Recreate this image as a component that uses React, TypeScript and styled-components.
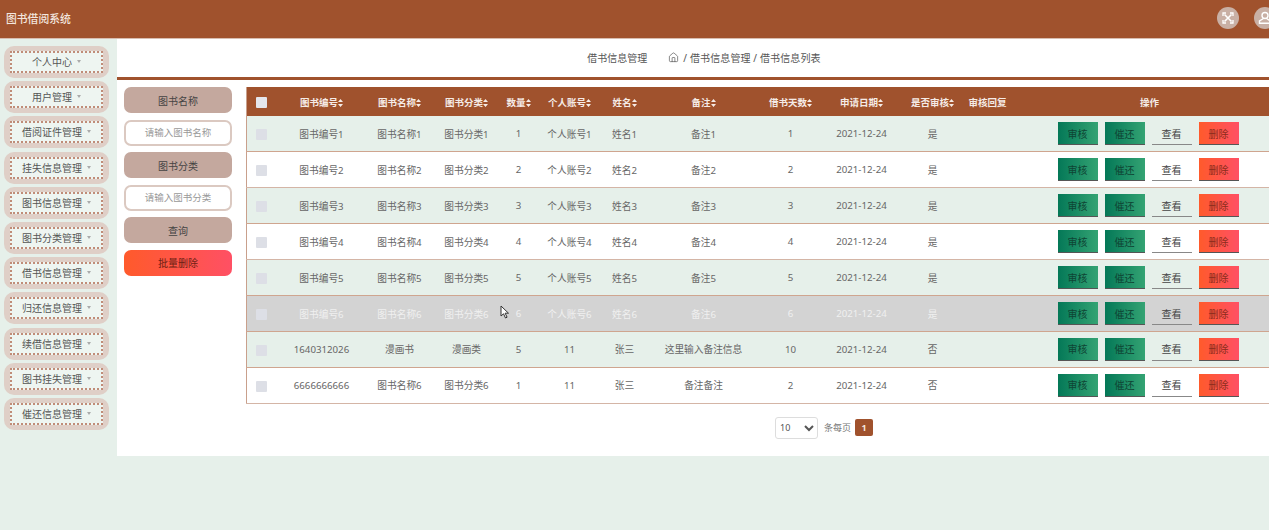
import React from "react";
import styled, { createGlobalStyle } from "styled-components";
import { House } from "lucide-react";

const Global = createGlobalStyle`
  html, body { margin: 0; padding: 0; height: 100%; overflow: hidden; background: #e6f0ea; }
  body { font-family: "Noto Sans", "Noto Sans CJK SC", sans-serif; font-size: 10px; color: #666; }
  * { box-sizing: border-box; }
`;

const Page = styled.div`
  width: 1269px;
  height: 530px;
  position: relative;
  overflow: hidden;
  background: #e6f0ea;
`;
const TopBar = styled.header`
  height: 39px;
  background: #a0522d;
  border-bottom: 1px solid #d8bdb0;
  display: flex;
  align-items: center;
  padding: 0 0 3px 6px;
  color: #f3e6df;
  font-size: 10.8px;
  font-weight: 500;
`;
const Title = styled.div`
  flex: 1;
`;
const Tools = styled.div`
  display: flex;
  gap: 15px;
  margin-right: -7px;
`;
const RoundIcon = styled.div`
  width: 22px;
  height: 22px;
  border-radius: 50%;
  background: #c9b0a5;
  display: flex;
  align-items: center;
  justify-content: center;
`;
const Body = styled.div`
  display: flex;
  align-items: flex-start;
`;
const Side = styled.nav`
  width: 117px;
  flex: none;
  padding: 7px 8px 0 4px;
  display: flex;
  flex-direction: column;
  gap: 3.2px;
`;
const MenuOuter = styled.div`
  height: 32px;
  border-radius: 10px;
  background: #dfcfc7;
  padding: 5px 6px;
`;
const MenuInner = styled.div`
  height: 22px;
  border: 2px dotted #c08c78;
  background: #eef5f1;
  display: flex;
  align-items: center;
  justify-content: center;
  gap: 5px;
  font-size: 10px;
  color: #555;
  padding-bottom: 1px;
`;
const Caret = styled.span`
  width: 0;
  height: 0;
  border-left: 2.5px solid transparent;
  border-right: 2.5px solid transparent;
  border-top: 3px solid #aaa;
`;
const Main = styled.main`
  width: 1152px;
  height: 417px;
  background: #fff;
  overflow: hidden;
`;
const CrumbBar = styled.div`
  height: 41px;
  border-bottom: 3px solid #a0522d;
  display: flex;
  align-items: center;
  justify-content: center;
  gap: 21px;
  padding: 0 0 2px 22px;
  font-size: 10px;
  color: #555;
`;
const Crumbs = styled.div`
  display: flex;
  align-items: center;
  gap: 4px;
  letter-spacing: 0.12px;
`;
const Content = styled.div`
  display: flex;
  align-items: flex-start;
  gap: 14px;
  padding: 7px 0 0 7px;
`;
const FilterCol = styled.div`
  width: 108px;
  flex: none;
  display: flex;
  flex-direction: column;
  gap: 6.6px;
`;
const FilterLabel = styled.div`
  height: 26px;
  border-radius: 7px;
  background: #c4a89e;
  color: #444;
  font-size: 10px;
  display: flex;
  align-items: center;
  justify-content: center;
`;
const FilterInput = styled.input`
  height: 26px;
  width: 100%;
  border-radius: 7px;
  border: 2px solid #dbc9c1;
  background: #fff;
  font: inherit;
  font-size: 9.5px;
  text-align: center;
  outline: none;
  padding: 0;
  &::placeholder { color: #999; }
`;
const DangerBtn = styled.div`
  height: 26px;
  border-radius: 7px;
  background: linear-gradient(90deg, #ff5a2b, #ff5064);
  color: #6e1f14;
  font-size: 10px;
  display: flex;
  align-items: center;
  justify-content: center;
`;
const TableArea = styled.div`
  width: 1040px;
  flex: none;
`;
const Table = styled.table`
  width: 1040px;
  table-layout: fixed;
  border-collapse: collapse;
  border-left: 1px solid #c9a08c;
`;
const HeadRow = styled.tr`
  height: 29px;
  background: #a0522d;
`;
const Th = styled.th`
  padding: 0;
  font-size: 9.5px;
  font-weight: 700;
  color: #f5ebe6;
  text-align: center;
  white-space: nowrap;
`;
const Sort = styled.svg`
  width: 5px;
  height: 8px;
  vertical-align: -1px;
`;
const Row = styled.tr<{ $kind: "alt" | "plain" | "hover" }>`
  height: 35.93px;
  border-bottom: 1.5px solid ${(p) => (p.$kind === "plain" ? "#d4b5a6" : "#cfa58f")};
  background: ${(p) => (p.$kind === "alt" ? "#e6f0ea" : p.$kind === "hover" ? "#d3d3d3" : "#fff")};
  color: ${(p) => (p.$kind === "hover" ? "#f0f0f0" : "#666")};
`;
const Td = styled.td`
  padding: 0;
  font-size: 9.7px;
  text-align: center;
  white-space: nowrap;
`;
const Check = styled.span<{ $head?: boolean }>`
  display: inline-block;
  width: 11px;
  height: 11px;
  vertical-align: middle;
  background: ${(p) => (p.$head ? "#e4e6ec" : "#dddfe6")};
  border-radius: 1px;
`;
const Actions = styled.div`
  display: flex;
  gap: 7px;
  padding-left: 45px;
`;
const ActionBtn = styled.div<{ $tone: "green" | "view" | "red" }>`
  width: 40px;
  height: 23px;
  font-size: 10px;
  display: flex;
  align-items: center;
  justify-content: center;
  color: ${(p) => (p.$tone === "view" ? "#444" : p.$tone === "red" ? "#8a2c1c" : "#0f4534")};
  background: ${(p) =>
    p.$tone === "green"
      ? "linear-gradient(90deg, #047857, #34a373)"
      : p.$tone === "red"
      ? "linear-gradient(90deg, #ff5a2b, #ff5064)"
      : "transparent"};
  border-bottom: 1.5px solid ${(p) => (p.$tone === "view" ? "#888" : "#555")};
`;
const Pager = styled.div`
  display: flex;
  align-items: center;
  padding: 13px 0 0 529px;
  font-size: 9px;
  color: #777;
`;
const PageSelect = styled.select`
  width: 43px;
  height: 22px;
  margin-right: 6px;
  border: 1px solid #ddd;
  border-radius: 3px;
  background: #fff;
  color: #555;
  font: inherit;
  font-size: 9px;
  outline: none;
`;
const PageNum = styled.div`
  width: 18px;
  height: 17px;
  margin-left: 4px;
  border-radius: 2px;
  background: #a0522d;
  color: #f5e6df;
  font-size: 9px;
  font-weight: 700;
  display: flex;
  align-items: center;
  justify-content: center;
`;
const Cursor = styled.svg`
  position: absolute;
  left: 500px;
  top: 305px;
  width: 10px;
  height: 14px;
`;

const menu = ["个人中心", "用户管理", "借阅证件管理", "挂失信息管理", "图书信息管理", "图书分类管理", "借书信息管理", "归还信息管理", "续借信息管理", "图书挂失管理", "催还信息管理"];
const cols = [30, 90, 66, 68, 36, 66, 44, 114, 60, 82, 60, 50, 274];
const heads: [string, boolean][] = [
  ["图书编号", true], ["图书名称", true], ["图书分类", true], ["数量", true], ["个人账号", true],
  ["姓名", true], ["备注", true], ["借书天数", true], ["申请日期", true], ["是否审核", true], ["审核回复", false], ["操作", false],
];
const numbered = [1, 2, 3, 4, 5, 6].map((n) => [
  `图书编号${n}`, `图书名称${n}`, `图书分类${n}`, `${n}`, `个人账号${n}`, `姓名${n}`, `备注${n}`, `${n}`, "2021-12-24", "是", "",
]);
const rows = [
  ...numbered,
  ["1640312026", "漫画书", "漫画类", "5", "11", "张三", "这里输入备注信息", "10", "2021-12-24", "否", ""],
  ["6666666666", "图书名称6", "图书分类6", "1", "11", "张三", "备注备注", "2", "2021-12-24", "否", ""],
];

export default function App() {
  return (
    <Page>
      <Global />
      <TopBar>
        <Title>图书借阅系统</Title>
        <Tools>
          <RoundIcon>
            <svg width="12" height="12" viewBox="0 0 12 12" fill="none" stroke="#fff" strokeWidth="1.6">
              <path d="M2.5 2.5 9.5 9.5M9.5 2.5 2.5 9.5" />
              <path d="M1 4V1h3M8 1h3v3M11 8v3H8M4 11H1V8" strokeWidth="1.3" />
            </svg>
          </RoundIcon>
          <RoundIcon>
            <svg width="14" height="14" viewBox="0 0 14 14" fill="none" stroke="#fff" strokeWidth="1.4">
              <circle cx="7" cy="4.5" r="3" />
              <path d="M5.5 7.5 1.5 10v2.3h11V10l-4-2.5" />
            </svg>
          </RoundIcon>
        </Tools>
      </TopBar>
      <Body>
        <Side>
          {menu.map((m) => (
            <MenuOuter key={m}>
              <MenuInner>{m}<Caret /></MenuInner>
            </MenuOuter>
          ))}
        </Side>
        <Main>
          <CrumbBar>
            <span>借书信息管理</span>
            <Crumbs>
              <House size={11} strokeWidth={1.5} />
              <span>/ 借书信息管理 / 借书信息列表</span>
            </Crumbs>
          </CrumbBar>
          <Content>
            <FilterCol>
              <FilterLabel>图书名称</FilterLabel>
              <FilterInput placeholder="请输入图书名称" readOnly />
              <FilterLabel>图书分类</FilterLabel>
              <FilterInput placeholder="请输入图书分类" readOnly />
              <FilterLabel>查询</FilterLabel>
              <DangerBtn>批量删除</DangerBtn>
            </FilterCol>
            <TableArea>
              <Table>
                <colgroup>
                  {cols.map((w, i) => <col key={i} width={w} />)}
                </colgroup>
                <thead>
                  <HeadRow>
                    <Th><Check $head /></Th>
                    {heads.map(([h, s]) => (
                      <Th key={h}>
                        {h}
                        {s && (
                          <Sort viewBox="0 0 5 8">
                            <path d="M2.5 0 5 3H0zM2.5 8 0 5h5z" fill="#f5ebe6" />
                          </Sort>
                        )}
                      </Th>
                    ))}
                  </HeadRow>
                </thead>
                <tbody>
                  {rows.map((r, i) => (
                    <Row key={i} $kind={i === 5 ? "hover" : i % 2 === 0 ? "alt" : "plain"}>
                      <Td><Check /></Td>
                      {r.map((c, j) => <Td key={j}>{c}</Td>)}
                      <Td>
                        <Actions>
                          <ActionBtn $tone="green">审核</ActionBtn>
                          <ActionBtn $tone="green">催还</ActionBtn>
                          <ActionBtn $tone="view">查看</ActionBtn>
                          <ActionBtn $tone="red">删除</ActionBtn>
                        </Actions>
                      </Td>
                    </Row>
                  ))}
                </tbody>
              </Table>
              <Pager>
                <PageSelect defaultValue="10">
                  <option>10</option>
                  <option>20</option>
                </PageSelect>
                <span>条每页</span>
                <PageNum>1</PageNum>
              </Pager>
            </TableArea>
          </Content>
        </Main>
      </Body>
      <Cursor viewBox="0 0 10 14">
        <path d="M1 1v10l2.5-2.2L5.5 13l1.6-.8-2-4H8.5z" fill="#fff" stroke="#333" strokeWidth="1" />
      </Cursor>
    </Page>
  );
}
